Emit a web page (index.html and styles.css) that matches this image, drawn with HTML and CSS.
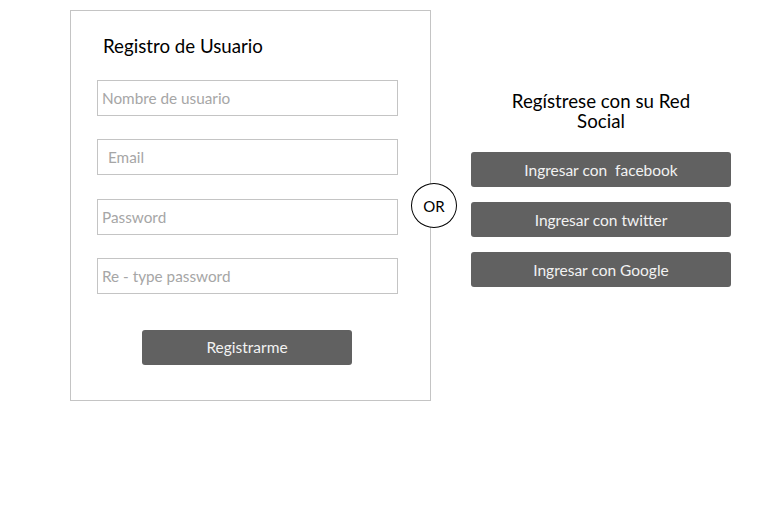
FILE: index.html
```html
<!DOCTYPE html>
<html lang="es">
<head>
<meta charset="utf-8">
<link rel="stylesheet" href="styles.css">
</head>
<body>
<div class="page">
  <div class="card">
    <h2 class="title">Registro de Usuario</h2>
    <div class="fields">
      <input class="field" type="text" placeholder="Nombre de usuario">
      <input class="field field-wide" type="text" placeholder="Email">
      <input class="field" type="password" placeholder="Password">
      <input class="field" type="password" placeholder="Re - type password">
      <button class="btn btn-register">Registrarme</button>
    </div>
    <div class="or">OR</div>
  </div>
  <div class="social">
    <h2 class="social-title">Regístrese con su Red<br>Social</h2>
    <button class="btn btn-social">Ingresar con&nbsp; facebook</button>
    <button class="btn btn-social">Ingresar con twitter</button>
    <button class="btn btn-social">Ingresar con Google</button>
  </div>
</div>
</body>
</html>
```
FILE: styles.css
```css
html, body {
  margin: 0;
  padding: 0;
  background: #fff;
}
body {
  font-family: Lato, "Liberation Sans", sans-serif;
  color: #000;
}
.page {
  display: flex;
  align-items: flex-start;
  padding: 10px 0 0 70px;
  gap: 40px;
}
.card {
  position: relative;
  box-sizing: border-box;
  width: 361px;
  height: 391px;
  border: 1px solid #c4c4c4;
  padding: 24px 0 0 26px;
}
.title {
  margin: 0 0 23px 6px;
  font-size: 18.7px;
  font-weight: 400;
  line-height: 22px;
}
.fields {
  display: flex;
  flex-direction: column;
  align-items: flex-start;
  gap: 23.3px;
}
.field {
  box-sizing: border-box;
  width: 301px;
  height: 36px;
  border: 1px solid #c4c4c4;
  padding: 0 4px;
  font-family: inherit;
  font-size: 15.3px;
  color: #333;
  outline: none;
}
.field-wide { padding-left: 10px; }
.field::placeholder { color: #a6a6a6; }
.btn {
  box-sizing: border-box;
  border: none;
  border-radius: 3px;
  background: #616161;
  color: #f2f2f2;
  font-family: inherit;
  font-size: 15.5px;
  cursor: pointer;
}
.btn-register {
  margin: 12.8px 0 0 45px;
  width: 210px;
  height: 35px;
}
.or {
  position: absolute;
  left: 340px;
  top: 172px;
  box-sizing: border-box;
  width: 46px;
  height: 45px;
  border: 1px solid #000;
  border-radius: 50%;
  background: #fff;
  display: flex;
  align-items: center;
  justify-content: center;
  font-size: 15px;
}
.social {
  display: flex;
  flex-direction: column;
  width: 260px;
  padding-top: 81px;
  gap: 15px;
}
.social-title {
  margin: 0 0 6px;
  text-align: center;
  font-size: 18.7px;
  font-weight: 400;
  line-height: 20px;
}
.btn-social {
  width: 260px;
  height: 35px;
}
```
